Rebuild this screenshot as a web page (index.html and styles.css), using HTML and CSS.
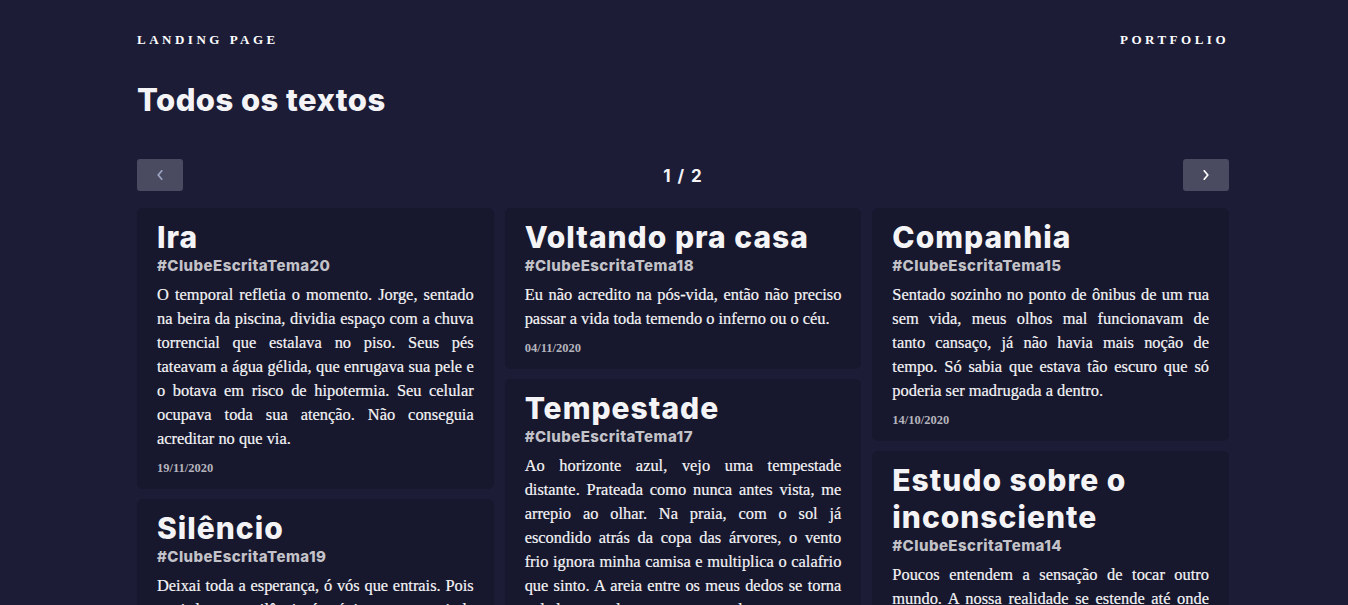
FILE: index.html
```html
<!DOCTYPE html>
<html lang="pt-BR">
<head>
<meta charset="utf-8">
<title>Todos os textos</title>
<link rel="stylesheet" href="styles.css">
</head>
<body>
<div class="page">
  <nav class="topnav">
    <a class="navlink" href="#">Landing Page</a>
    <a class="navlink" href="#">Portfolio</a>
  </nav>
  <h1 class="page-title">Todos os textos</h1>
  <div class="pager">
    <button class="pager-btn pager-btn--disabled" aria-label="Anterior"><svg class="chev" viewBox="0 0 6 10" width="6" height="10"><polyline points="4.8,0.8 1.2,5 4.8,9.2"/></svg></button>
    <span class="pager-count">1 / 2</span>
    <button class="pager-btn" aria-label="Próxima"><svg class="chev" viewBox="0 0 6 10" width="6" height="10"><polyline points="1.2,0.8 4.8,5 1.2,9.2"/></svg></button>
  </div>
  <div class="grid">
    <div class="col">
      <article class="card">
        <h2 class="card-title">Ira</h2>
        <div class="card-tag">#ClubeEscritaTema20</div>
        <p class="card-text">O temporal refletia o momento. Jorge, sentado na beira da piscina, dividia espaço com a chuva torrencial que estalava no piso. Seus pés tateavam a água gélida, que enrugava sua pele e o botava em risco de hipotermia. Seu celular ocupava toda sua atenção. Não conseguia acreditar no que via.</p>
        <div class="card-date">19/11/2020</div>
      </article>
      <article class="card">
        <h2 class="card-title">Silêncio</h2>
        <div class="card-tag">#ClubeEscritaTema19</div>
        <p class="card-text">Deixai toda a esperança, ó vós que entrais. Pois aqui dentro o silêncio é a única voz que ainda se escuta.</p>
        <div class="card-date">28/10/2020</div>
      </article>
    </div>
    <div class="col">
      <article class="card">
        <h2 class="card-title">Voltando pra casa</h2>
        <div class="card-tag">#ClubeEscritaTema18</div>
        <p class="card-text">Eu não acredito na pós-vida, então não preciso passar a vida toda temendo o inferno ou o céu.</p>
        <div class="card-date">04/11/2020</div>
      </article>
      <article class="card">
        <h2 class="card-title">Tempestade</h2>
        <div class="card-tag">#ClubeEscritaTema17</div>
        <p class="card-text">Ao horizonte azul, vejo uma tempestade distante. Prateada como nunca antes vista, me arrepio ao olhar. Na praia, com o sol já escondido atrás da copa das árvores, o vento frio ignora minha camisa e multiplica o calafrio que sinto. A areia entre os meus dedos se torna gelada e pesada, enquanto as ondas avançam.</p>
        <div class="card-date">21/10/2020</div>
      </article>
    </div>
    <div class="col">
      <article class="card">
        <h2 class="card-title">Companhia</h2>
        <div class="card-tag">#ClubeEscritaTema15</div>
        <p class="card-text">Sentado sozinho no ponto de ônibus de um rua sem vida, meus olhos mal funcionavam de tanto&nbsp;cansaço, já não havia mais noção de tempo. Só sabia que estava tão escuro que só poderia ser madrugada a dentro.</p>
        <div class="card-date">14/10/2020</div>
      </article>
      <article class="card">
        <h2 class="card-title">Estudo sobre o inconsciente</h2>
        <div class="card-tag">#ClubeEscritaTema14</div>
        <p class="card-text">Poucos entendem a sensação de tocar outro mundo. A nossa realidade se estende até onde os nossos sentidos alcançam, e o resto é sonho.</p>
        <div class="card-date">07/10/2020</div>
      </article>
    </div>
  </div>
</div>
</body>
</html>
```
FILE: styles.css
```css
* { box-sizing: border-box; }
html, body { margin: 0; padding: 0; }
body {
  background: #1c1c37;
  color: #f4f4f6;
  font-family: "Liberation Serif", serif;
}
.page {
  width: 1092px;
  margin-left: 137px;
}
.topnav {
  display: flex;
  justify-content: space-between;
  align-items: center;
  padding-top: 32px;
  height: 48px;
}
.navlink {
  color: #ffffff;
  text-decoration: none;
  text-transform: uppercase;
  font-family: "Liberation Serif", serif;
  font-weight: 700;
  font-size: 13px;
  letter-spacing: 3.5px;
  line-height: 16px;
}
.page-title {
  margin: 34px 0 0;
  font-family: Inter, "Open Sans", sans-serif;
  font-weight: 800;
  font-size: 31px;
  letter-spacing: 0.45px;
  line-height: 36px;
}
.pager {
  margin-top: 41px;
  display: flex;
  align-items: center;
  justify-content: space-between;
}
.pager-btn {
  width: 46px;
  height: 32px;
  border: 0;
  border-radius: 3px;
  background: #4a4a61;
  color: #ffffff;
  padding: 0;
  display: flex;
  align-items: center;
  justify-content: center;
}
.pager-btn--disabled { color: #9ea6c2; }
.chev {
  display: block;
  fill: none;
  stroke: currentColor;
  stroke-width: 1.7;
  stroke-linecap: round;
  stroke-linejoin: round;
}
.pager-count {
  font-family: Inter, "Open Sans", sans-serif;
  font-weight: 700;
  font-size: 17px;
  letter-spacing: 1px;
  word-spacing: 1px;
  padding-top: 2px;
}
.grid {
  margin-top: 17px;
  display: grid;
  grid-template-columns: repeat(3, 1fr);
  column-gap: 11px;
  align-items: start;
}
.col {
  display: flex;
  flex-direction: column;
  gap: 10px;
}
.card {
  background: #17172d;
  border-radius: 6px;
  padding: 11px 20px 13px;
}
.card-title {
  margin: 0;
  font-family: Inter, "Open Sans", sans-serif;
  font-weight: 800;
  font-size: 30px;
  letter-spacing: 1px;
  line-height: 37px;
}
.card-tag {
  font-family: Inter, "Open Sans", sans-serif;
  font-weight: 800;
  font-size: 15px;
  letter-spacing: 0.45px;
  line-height: 20px;
  color: #c2c2c8;
}
.card-text {
  margin: 7px 0 0;
  font-size: 16.4px;
  line-height: 24px;
  text-align: justify;
  -webkit-text-stroke: 0.2px currentColor;
}
.card-date {
  margin-top: 9px;
  font-weight: 700;
  font-size: 12.5px;
  line-height: 16px;
  color: #b4b4bc;
}
```
